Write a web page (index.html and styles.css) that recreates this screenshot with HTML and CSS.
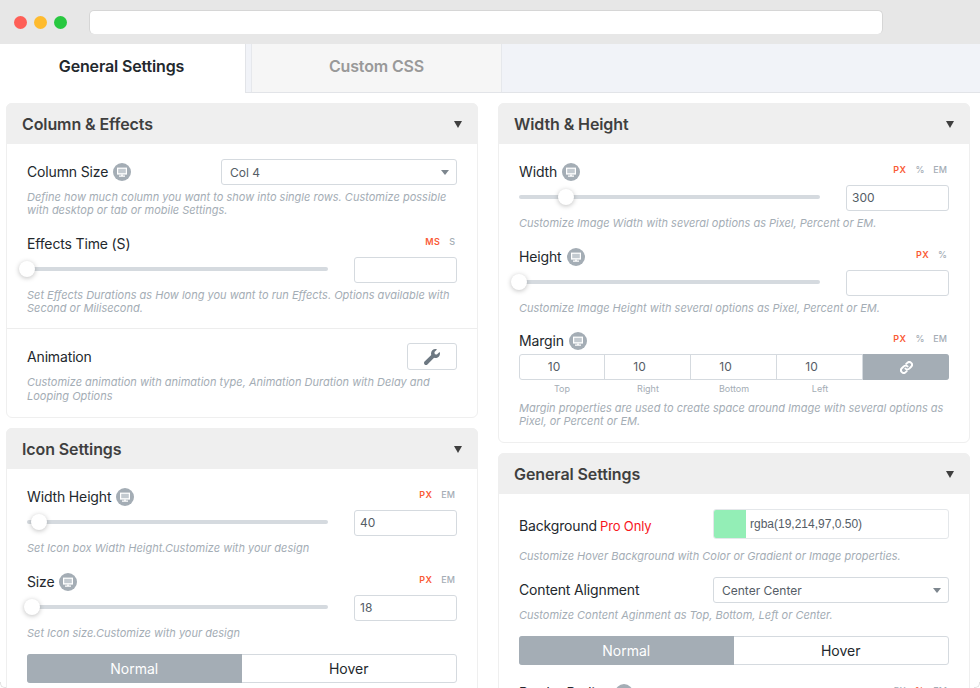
FILE: index.html
```html
<!DOCTYPE html>
<html lang="en">
<head>
    <meta charset="UTF-8">
    <title>General Settings</title>
    <link rel="stylesheet" href="styles.css">
</head>
<body>
    <svg class="defs" width="0" height="0">
        <symbol id="desk" viewBox="0 0 18 18">
            <circle cx="9" cy="9" r="9" fill="#a4adb5"/>
            <path d="M4 4.6h10v7H4z" fill="#fff"/>
            <path d="M5.2 5.8h7.600v4.400H5.200z" fill="#c3cad0"/>
            <path d="M6 12.600h6v1.100H6zM8.200 11.400h1.600v1.400H8.200z" fill="#fff"/>
        </symbol>
    </svg>
    <div class="window">
        <div class="titlebar">
            <span class="dot red"></span>
            <span class="dot yellow"></span>
            <span class="dot green"></span>
            <div class="address"></div>
        </div>
        <div class="tabs">
            <div class="tab active">General Settings</div>
            <div class="tab second">Custom CSS</div>
        </div>
        <div class="columns">
            <div class="column">
                <div class="panel">
                    <div class="panel-head">Column &amp; Effects<span class="caret"></span></div>
                    <div class="panel-body">
                        <div class="row-select">
                            <div class="label">Column Size <svg class="desk"><use href="#desk"/></svg></div>
                            <div class="select">Col 4<span class="select-caret"></span></div>
                        </div>
                        <p class="desc first-desc">Define how much column you want to show into single rows. Customize possible with desktop or tab or mobile Settings.</p>
                        <div class="label-row gap-row">
                            <div class="label">Effects Time (S)</div>
                            <div class="units"><b>MS</b><span>S</span></div>
                        </div>
                        <div class="slider-row">
                            <div class="track"><span class="thumb" style="left: 0px"></span></div>
                            <div class="input"></div>
                        </div>
                        <p class="desc">Set Effects Durations as How long you want to run Effects. Options available with Second or Milisecond.</p>
                    </div>
                    <div class="panel-body lower">
                        <div class="row-anim">
                            <div class="label">Animation</div>
                            <div class="wrench-btn">
                                <svg width="16" height="16" viewBox="0 0 512 512"><path fill="#6d7882" d="M507.700 109.100c-2.200-9-13.500-12.100-20.100-5.500l-74.400 74.400-67.900-11.300-11.300-67.900 74.400-74.400c6.600-6.600 3.400-17.900-5.700-20.200-47.400-11.700-99.500 .9-136.500 37.900-39.600 39.600-50.600 97.100-34 147.100L18.700 402.800c-25 25-25 65.500 0 90.500 25 25 65.500 25 90.500 0l213.200-213.200c50 16.700 107.500 5.700 147.400-34.200 37.100-37.100 49.700-89.300 37.900-136.800z"/></svg>
                            </div>
                        </div>
                        <p class="desc anim-desc">Customize animation with animation type, Animation Duration with Delay and Looping Options</p>
                    </div>
                </div>
                <div class="panel">
                    <div class="panel-head">Icon Settings<span class="caret"></span></div>
                    <div class="panel-body end-body">
                        <div class="label-row">
                            <div class="label">Width Height <svg class="desk"><use href="#desk"/></svg></div>
                            <div class="units"><b>PX</b><span>EM</span></div>
                        </div>
                        <div class="slider-row">
                            <div class="track"><span class="thumb" style="left: 12px"></span></div>
                            <div class="input">40</div>
                        </div>
                        <p class="desc">Set Icon box Width Height.Customize with your design</p>
                        <div class="label-row gap-row">
                            <div class="label">Size <svg class="desk"><use href="#desk"/></svg></div>
                            <div class="units"><b>PX</b><span>EM</span></div>
                        </div>
                        <div class="slider-row">
                            <div class="track"><span class="thumb" style="left: 5px"></span></div>
                            <div class="input">18</div>
                        </div>
                        <p class="desc">Set Icon size.Customize with your design</p>
                        <div class="switch"><div class="on">Normal</div><div>Hover</div></div>
                    </div>
                </div>
            </div>
            <div class="column">
                <div class="panel">
                    <div class="panel-head">Width &amp; Height<span class="caret"></span></div>
                    <div class="panel-body end-body">
                        <div class="label-row">
                            <div class="label">Width <svg class="desk"><use href="#desk"/></svg></div>
                            <div class="units"><b>PX</b><span>%</span><span>EM</span></div>
                        </div>
                        <div class="slider-row">
                            <div class="track"><span class="thumb" style="left: 47px"></span></div>
                            <div class="input">300</div>
                        </div>
                        <p class="desc">Customize Image Width with several options as Pixel, Percent or EM.</p>
                        <div class="label-row gap-row">
                            <div class="label">Height <svg class="desk"><use href="#desk"/></svg></div>
                            <div class="units"><b>PX</b><span>%</span></div>
                        </div>
                        <div class="slider-row">
                            <div class="track"><span class="thumb" style="left: 0px"></span></div>
                            <div class="input"></div>
                        </div>
                        <p class="desc">Customize Image Height with several options as Pixel, Percent or EM.</p>
                        <div class="label-row gap-margin">
                            <div class="label">Margin <svg class="desk"><use href="#desk"/></svg></div>
                            <div class="units"><b>PX</b><span>%</span><span>EM</span></div>
                        </div>
                        <div class="margins">
                            <div>10</div><div>10</div><div>10</div><div>10</div>
                            <div class="link">
                                <svg width="13" height="13" viewBox="0 0 24 24" fill="none" stroke="#fff" stroke-width="3.600" stroke-linecap="round"><path d="M10 14a5 5 0 0 0 7.100 0l3.500-3.500a5 5 0 0 0-7.100-7.100L11.500 5.400"/><path d="M14 10a5 5 0 0 0-7.100 0l-3.500 3.500a5 5 0 0 0 7.100 7.100l2-2"/></svg>
                            </div>
                        </div>
                        <div class="margin-caps"><span>Top</span><span>Right</span><span>Bottom</span><span>Left</span><span></span></div>
                        <p class="desc margin-desc">Margin properties are used to create space around Image with several options as Pixel, or Percent or EM.</p>
                    </div>
                </div>
                <div class="panel">
                    <div class="panel-head">General Settings<span class="caret"></span></div>
                    <div class="panel-body">
                        <div class="row-select row-color">
                            <div class="label">Background <span class="pro">Pro Only</span></div>
                            <div class="color"><span class="swatch"></span>rgba(19,214,97,0.50)</div>
                        </div>
                        <p class="desc color-desc">Customize Hover Background with Color or Gradient or Image properties.</p>
                        <div class="row-select gap-align">
                            <div class="label">Content Alignment</div>
                            <div class="select">Center Center<span class="select-caret"></span></div>
                        </div>
                        <p class="desc first-desc">Customize Content Aginment as Top, Bottom, Left or Center.</p>
                        <div class="switch"><div class="on">Normal</div><div>Hover</div></div>
                        <div class="label-row gap-radius">
                            <div class="label">Border Radius <svg class="desk"><use href="#desk"/></svg></div>
                            <div class="units"><span>PX</span><b>%</b><span>EM</span></div>
                        </div>
                    </div>
                </div>
            </div>
        </div>
    </div>
</body>
</html>
```

FILE: styles.css
```css
html, body {
    margin: 0;
    padding: 0;
    background: #fff;
}
body {
    font-family: Inter, "Liberation Sans", sans-serif;
    color: #23282d;
}
.defs {
    position: absolute;
}
.window {
    position: relative;
    width: 980px;
    height: 688px;
    overflow: hidden;
    background: #fff;
}
/* rounded bottom corners of the window frame */
.window::before,
.window::after {
    content: "";
    position: absolute;
    bottom: 0;
    width: 5px;
    height: 5px;
    border-bottom: 1px solid #e2e2e2;
}
.window::before {
    left: 0;
    border-left: 1px solid #e2e2e2;
    border-bottom-left-radius: 5px;
}
.window::after {
    right: 0;
    border-right: 1px solid #e2e2e2;
    border-bottom-right-radius: 5px;
}
.titlebar {
    height: 44px;
    box-sizing: border-box;
    padding: 0 97px 0 14px;
    background: #e7e7e7;
    display: flex;
    align-items: center;
    gap: 7px;
}
.dot {
    width: 13px;
    height: 13px;
    border-radius: 50%;
}
.red { background: #fe5f57; }
.yellow { background: #febb2e; }
.green { background: #28c840; }
.address {
    flex: 1;
    height: 24px;
    margin-left: 15px;
    box-sizing: border-box;
    background: #fff;
    border: 1px solid #d6d6d6;
    border-width: 1px 1px 0 1px;
    border-radius: 5px;
}
.tabs {
    height: 49px;
    display: flex;
    background: #f1f3f8;
    box-sizing: border-box;
    border-bottom: 1px solid #e2e4e8;
}
.tab {
    font-size: 16px;
    font-weight: 600;
    letter-spacing: -0.15px;
    display: flex;
    align-items: center;
    justify-content: center;
    box-sizing: border-box;
    height: 49px;
    padding-bottom: 5px;
}
.tab.active {
    width: 246px;
    padding-right: 2px;
    background: #fff;
    border-right: 1px solid #e2e4e8;
}
.tab.second {
    width: 251px;
    margin-left: 5px;
    height: 48px;
    padding-bottom: 4px;
    color: #999;
    background: #f6f6f6;
    border-left: 1px solid #e6e8ec;
    border-right: 1px solid #e6e8ec;
}
.columns {
    display: flex;
    gap: 20px;
    padding: 10px 10px 0 6px;
}
.column {
    width: 472px;
    display: flex;
    flex-direction: column;
    gap: 10px;
}
.panel {
    box-sizing: border-box;
    border: 1px solid #efefef;
    border-radius: 6px;
    background: #fff;
}
.panel-head {
    height: 40px;
    margin: -1px -1px 0;
    padding: 1px 16px 0 16px;
    background: #efefef;
    border-radius: 6px 6px 0 0;
    font-size: 16px;
    font-weight: 600;
    letter-spacing: -0.1px;
    color: #3f3f3f;
    display: flex;
    align-items: center;
    justify-content: space-between;
}
.caret {
    width: 0;
    height: 0;
    border-left: 4.500px solid transparent;
    border-right: 4.500px solid transparent;
    border-top: 7px solid #3f3f3f;
}
.panel-body {
    padding: 15px 20px 0;
}
.panel-body.lower {
    margin-top: 13px;
    padding-top: 14px;
    padding-bottom: 14px;
    border-top: 1px solid #ededed;
}
.panel-body.end-body {
    padding-bottom: 14px;
}
.label {
    font-size: 14px;
    line-height: 18px;
    letter-spacing: -0.15px;
    color: #23282d;
    display: flex;
    align-items: center;
    gap: 5px;
    white-space: nowrap;
}
.desk {
    width: 18px;
    height: 18px;
}
.pro {
    margin-left: -2px;
    color: #f8161d;
    font-size: 13px;
}
.label-row {
    display: flex;
    justify-content: space-between;
    align-items: center;
    height: 18px;
    padding-top: 4px;
}
.units {
    display: flex;
    gap: 9px;
    font-size: 9px;
    line-height: 12px;
    color: #a4adb5;
    font-weight: 500;
    padding-right: 2px;
    margin-top: -4px;
}
.units b {
    color: #fa5a35;
    font-weight: 600;
    letter-spacing: 0.4px;
}
.gap-row { margin-top: 14px; }
.gap-margin { margin-top: 13px; }
.gap-radius { margin-top: 15px; }
.gap-align { margin-top: 14px; }
.slider-row {
    display: flex;
    justify-content: space-between;
    align-items: center;
    margin-top: 4px;
}
.track {
    width: 301px;
    height: 4px;
    margin-bottom: 2px;
    border-radius: 2px;
    background: #d5dadf;
    position: relative;
}
.thumb {
    position: absolute;
    top: -6px;
    margin-left: -8px;
    width: 16px;
    height: 16px;
    border-radius: 50%;
    background: #fff;
    box-shadow: 0 1px 5px rgba(0, 0, 0, 0.25);
}
.input {
    width: 103px;
    height: 26px;
    box-sizing: border-box;
    border: 1px solid #d5dadf;
    border-radius: 3px;
    font-size: 12px;
    line-height: 24px;
    padding-left: 5px;
    color: #555d66;
}
.desc {
    margin: 6px 0 0;
    font-size: 11px;
    font-style: italic;
    line-height: 13px;
    color: #a4adb5;
}
.first-desc { margin-top: 6px; }
.anim-desc { margin-top: 5px; line-height: 14px; }
.margin-desc { margin-top: 7px; }
.color-desc { margin-top: 11px; }
.row-select {
    display: flex;
    justify-content: space-between;
    align-items: center;
    height: 26px;
}
.row-color { height: 30px; }
.row-color .label { margin-top: 4px; }
.select {
    width: 236px;
    height: 26px;
    box-sizing: border-box;
    border: 1px solid #d5dadf;
    border-radius: 3px;
    font-size: 12px;
    line-height: 24px;
    padding: 1px 8px 0;
    color: #555d66;
    display: flex;
    justify-content: space-between;
    align-items: center;
}
.select-caret {
    width: 0;
    height: 0;
    border-left: 4px solid transparent;
    border-right: 4px solid transparent;
    border-top: 5px solid #7d868e;
    margin: -1px -1px 0 0;
}
.color {
    width: 236px;
    height: 30px;
    box-sizing: border-box;
    border: 1px solid #e4e7ea;
    border-radius: 3px;
    font-family: "Liberation Sans", sans-serif;
    font-size: 12px;
    color: #555d66;
    display: flex;
    align-items: center;
    gap: 4px;
    overflow: hidden;
}
.swatch {
    width: 32px;
    height: 30px;
    background: #93eeb6;
}
.row-anim {
    display: flex;
    justify-content: space-between;
    align-items: center;
    height: 27px;
}
.wrench-btn {
    width: 50px;
    height: 27px;
    box-sizing: border-box;
    border: 1px solid #d5dadf;
    border-radius: 3px;
    display: flex;
    align-items: center;
    justify-content: center;
}
.switch {
    display: flex;
    height: 29px;
    margin-top: 14px;
    box-sizing: border-box;
    border: 1px solid #d5dadf;
    border-radius: 3px;
    font-size: 14px;
    line-height: 27px;
    text-align: center;
    color: #23282d;
}
.switch div {
    flex: 1;
}
.switch .on {
    margin: -1px 0 -1px -1px;
    line-height: 29px;
    background: #a4adb5;
    color: #fff;
    border-radius: 3px 0 0 3px;
}
.margins {
    display: flex;
    height: 26px;
    margin-top: 4px;
    box-sizing: border-box;
    border: 1px solid #d5dadf;
    border-radius: 3px;
    font-size: 12px;
    line-height: 24px;
    color: #555d66;
}
.margins div {
    box-sizing: border-box;
    flex: none;
    width: 86px;
    text-align: center;
    padding-right: 16px;
    border-right: 1px solid #d5dadf;
}
.margins div:first-child {
    width: 85px;
}
.margins .link {
    flex: 1;
    margin: -1px -1px -1px 0;
    padding: 0;
    border: 0;
    background: #a4adb5;
    border-radius: 0 3px 3px 0;
    display: flex;
    align-items: center;
    justify-content: center;
}
.margin-caps {
    display: flex;
    margin-top: 3px;
    font-size: 9px;
    line-height: 12px;
    color: #a4adb5;
    text-align: center;
}
.margin-caps span {
    flex: 1;
}
```
